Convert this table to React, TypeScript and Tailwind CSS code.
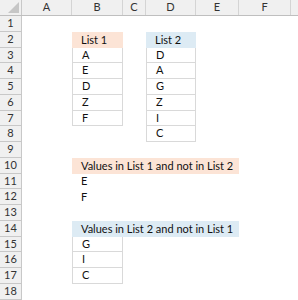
type Cell = {
	text?: string;
	fill?: "peach" | "blue";
	boxed?: boolean;
	span?: number;
};

// column widths: A, B, C, D, E, F and the sliver of G at the edge
const columns = [
	{ name: "A", w: "w-[50px]" },
	{ name: "B", w: "w-[51px]" },
	{ name: "C", w: "w-[23px]" },
	{ name: "D", w: "w-[50px]" },
	{ name: "E", w: "w-[43px]" },
	{ name: "F", w: "w-[52px]" },
	{ name: "", w: "w-[40px]" },
];

const rowHeights = [
	"h-[16px]", "h-[16px]", "h-[15px]", "h-[16px]", "h-[16px]", "h-[16px]",
	"h-[15px]", "h-[16px]", "h-[16px]", "h-[16px]", "h-[15px]", "h-[16px]",
	"h-[16px]", "h-[16px]", "h-[15px]", "h-[16px]", "h-[16px]", "h-[16px]",
];

// sheet contents keyed by row number, then column index
const sheet: Record<number, Record<number, Cell>> = {
	2: { 1: { text: "List 1", fill: "peach" }, 3: { text: "List 2", fill: "blue" } },
	3: { 1: { text: "A", boxed: true }, 3: { text: "D", boxed: true } },
	4: { 1: { text: "E", boxed: true }, 3: { text: "A", boxed: true } },
	5: { 1: { text: "D", boxed: true }, 3: { text: "G", boxed: true } },
	6: { 1: { text: "Z", boxed: true }, 3: { text: "Z", boxed: true } },
	7: { 1: { text: "F", boxed: true }, 3: { text: "I", boxed: true } },
	8: { 3: { text: "C", boxed: true } },
	10: { 1: { text: "Values in List 1 and not in List 2", fill: "peach", span: 4 } },
	11: { 1: { text: "E" } },
	12: { 1: { text: "F" } },
	14: { 1: { text: "Values in List 2 and not in List 1", fill: "blue", span: 4 } },
	15: { 1: { text: "G", boxed: true } },
	16: { 1: { text: "I", boxed: true } },
	17: { 1: { text: "C", boxed: true } },
};

const spanWidths: Record<number, string> = {
	4: "w-[167px]",
};

const SheetCell = ({ cell, w }: { cell?: Cell; w: string }) => {
	if (!cell) return <div className={`${w} shrink-0 h-full`} />;
	const width = cell.span ? spanWidths[cell.span] : w;
	return (
		<div
			className={[
				width,
				"shrink-0 h-full flex items-center pl-[9px] whitespace-nowrap text-[11px] text-[#111]",
				cell.fill === "peach" ? "bg-[#fce4d6]" : "",
				cell.fill === "blue" ? "bg-[#ddebf4]" : "",
				cell.boxed ? "border-l border-r border-b border-[#d9d9d9]" : "",
			].join(" ")}
		>
			{cell.text}
		</div>
	);
};

const App = () => {
	return (
		<div
			className="w-[298px] h-[300px] overflow-hidden bg-white flex flex-col"
			style={{ fontFamily: "Lato, 'Liberation Sans', sans-serif" }}
		>
			{/* column letters */}
			<div className="flex h-[16px] shrink-0 bg-[#f0f0f0] border-b border-[#bfbfbf]">
				<div className="w-[22px] shrink-0 relative border-r border-[#c8c8c8]">
					<svg className="absolute right-[2px] bottom-[2px]" width="11" height="11" viewBox="0 0 11 11">
						<polygon points="11,0 11,11 0,11" fill="#c6c6c6" />
					</svg>
				</div>
				{columns.map((col, i) => (
					<div
						key={i}
						className={`${col.w} shrink-0 flex items-center justify-center border-r border-[#d4d4d4] text-[11px] text-[#333]`}
					>
						{col.name}
					</div>
				))}
			</div>

			{rowHeights.map((h, i) => {
				const row = i + 1;
				const cells = sheet[row] ?? {};
				const out = [];
				for (let c = 0; c < columns.length; c++) {
					const cell = cells[c];
					out.push(<SheetCell key={c} cell={cell} w={columns[c].w} />);
					if (cell?.span) c += cell.span - 1;
				}
				return (
					<div key={row} className={`${h} shrink-0 flex`}>
						<div className="w-[22px] shrink-0 flex items-center justify-center bg-[#f0f0f0] border-r border-b border-[#c8c8c8] text-[11px] text-[#333]">
							{row}
						</div>
						{out}
					</div>
				);
			})}
		</div>
	);
};

export default App;
